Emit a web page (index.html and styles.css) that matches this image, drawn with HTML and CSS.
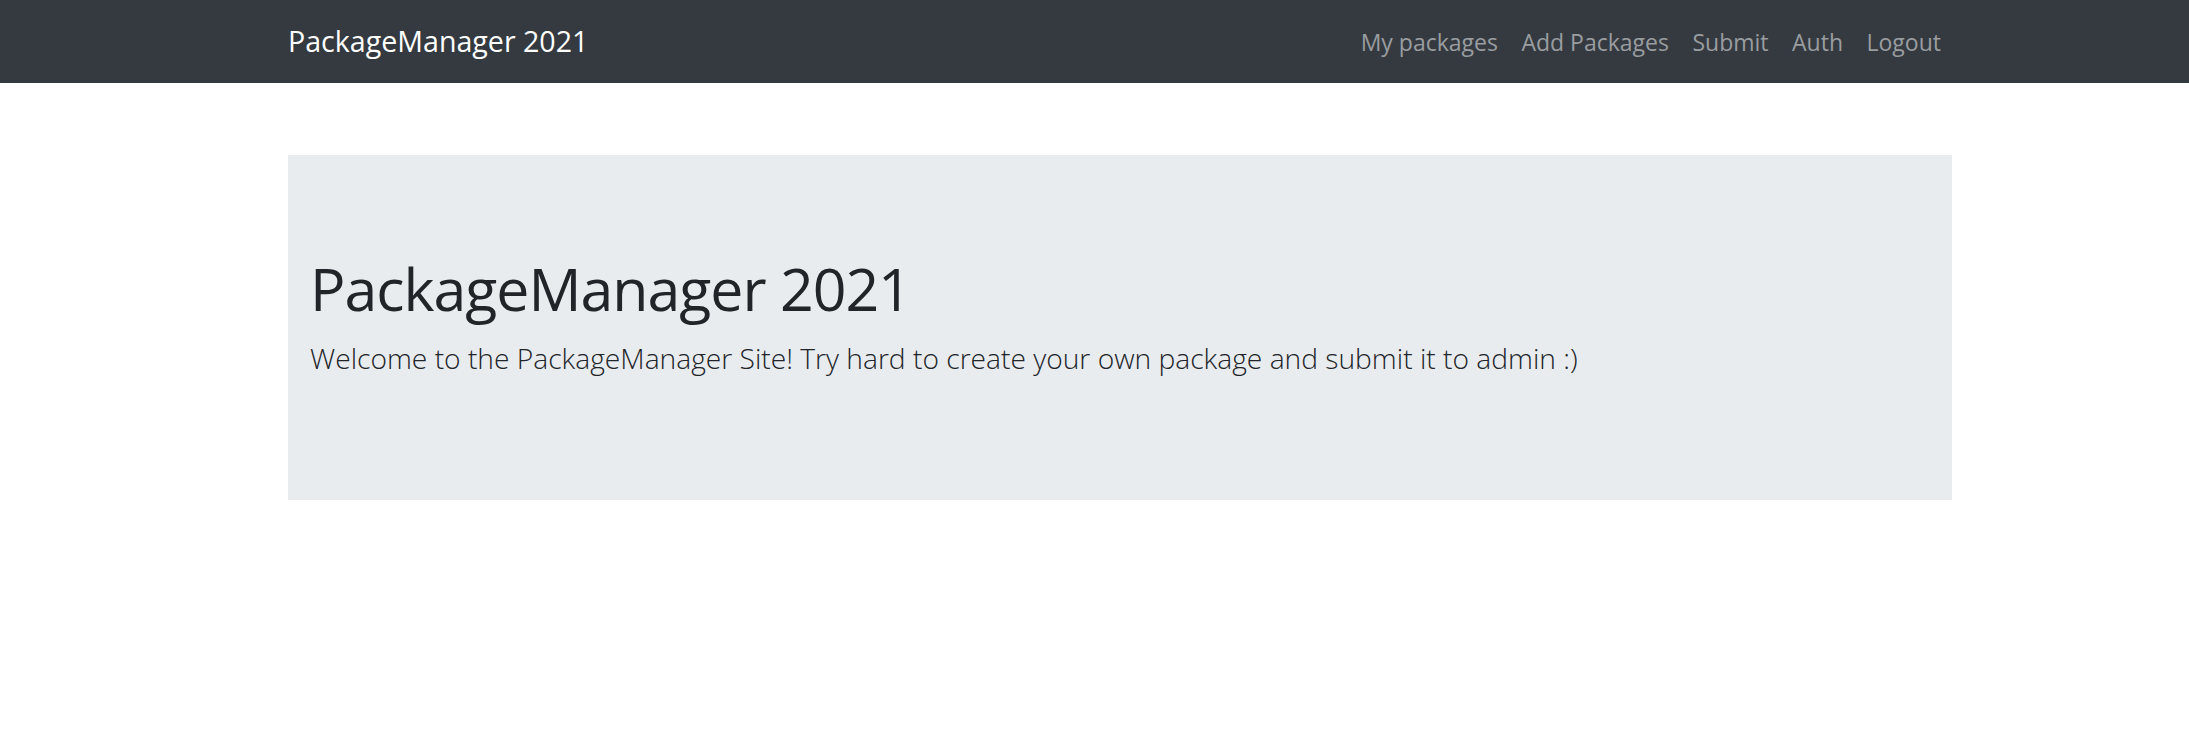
FILE: index.html
```html
<!DOCTYPE html>
<html lang="en">
<head>
<meta charset="utf-8">
<title>PackageManager 2021</title>
<link rel="stylesheet" href="styles.css">
</head>
<body>
<nav class="navbar">
  <div class="navbar-inner">
    <a class="brand" href="#">PackageManager 2021</a>
    <ul class="nav-links">
      <li><a href="#">My packages</a></li>
      <li><a href="#">Add Packages</a></li>
      <li><a href="#">Submit</a></li>
      <li><a href="#">Auth</a></li>
      <li><a href="#">Logout</a></li>
    </ul>
  </div>
</nav>
<main class="container">
  <section class="jumbotron">
    <h1 class="display">PackageManager 2021</h1>
    <p class="lead">Welcome to the PackageManager Site! Try hard to create your own package and submit it to admin :)</p>
  </section>
</main>
</body>
</html>
```

FILE: styles.css
```css
html, body {
  margin: 0;
  padding: 0;
}
body {
  font-family: "Open Sans", "Noto Sans", "Liberation Sans", sans-serif;
  color: #212529;
  background: #ffffff;
}
a {
  text-decoration: none;
}
.navbar {
  background: #343a40;
  height: 83px;
  display: flex;
  align-items: center;
}
.navbar-inner {
  display: flex;
  align-items: center;
  justify-content: space-between;
  width: 100%;
  padding-left: 288px;
  padding-right: 248px;
  box-sizing: border-box;
}
.brand {
  color: #ffffff;
  font-size: 28.6px;
  line-height: 1;
}
.nav-links {
  list-style: none;
  margin: 0;
  padding: 3px 0 0;
  display: flex;
  gap: 23.5px;
}
.nav-links a {
  color: #9a9da0;
  font-size: 23px;
  line-height: 1;
}
.container {
  padding-left: 288px;
  padding-top: 72px;
}
.jumbotron {
  background: #e9ecef;
  width: 1664px;
  height: 345px;
  box-sizing: border-box;
  padding: 97px 22px 0;
}
.display {
  font-size: 59px;
  font-weight: 400;
  line-height: 72px;
  margin: 0 0 12px;
  letter-spacing: -1px;
}
.lead {
  font-size: 28.2px;
  font-weight: 300;
  line-height: 45px;
  margin: 0;
}
```
